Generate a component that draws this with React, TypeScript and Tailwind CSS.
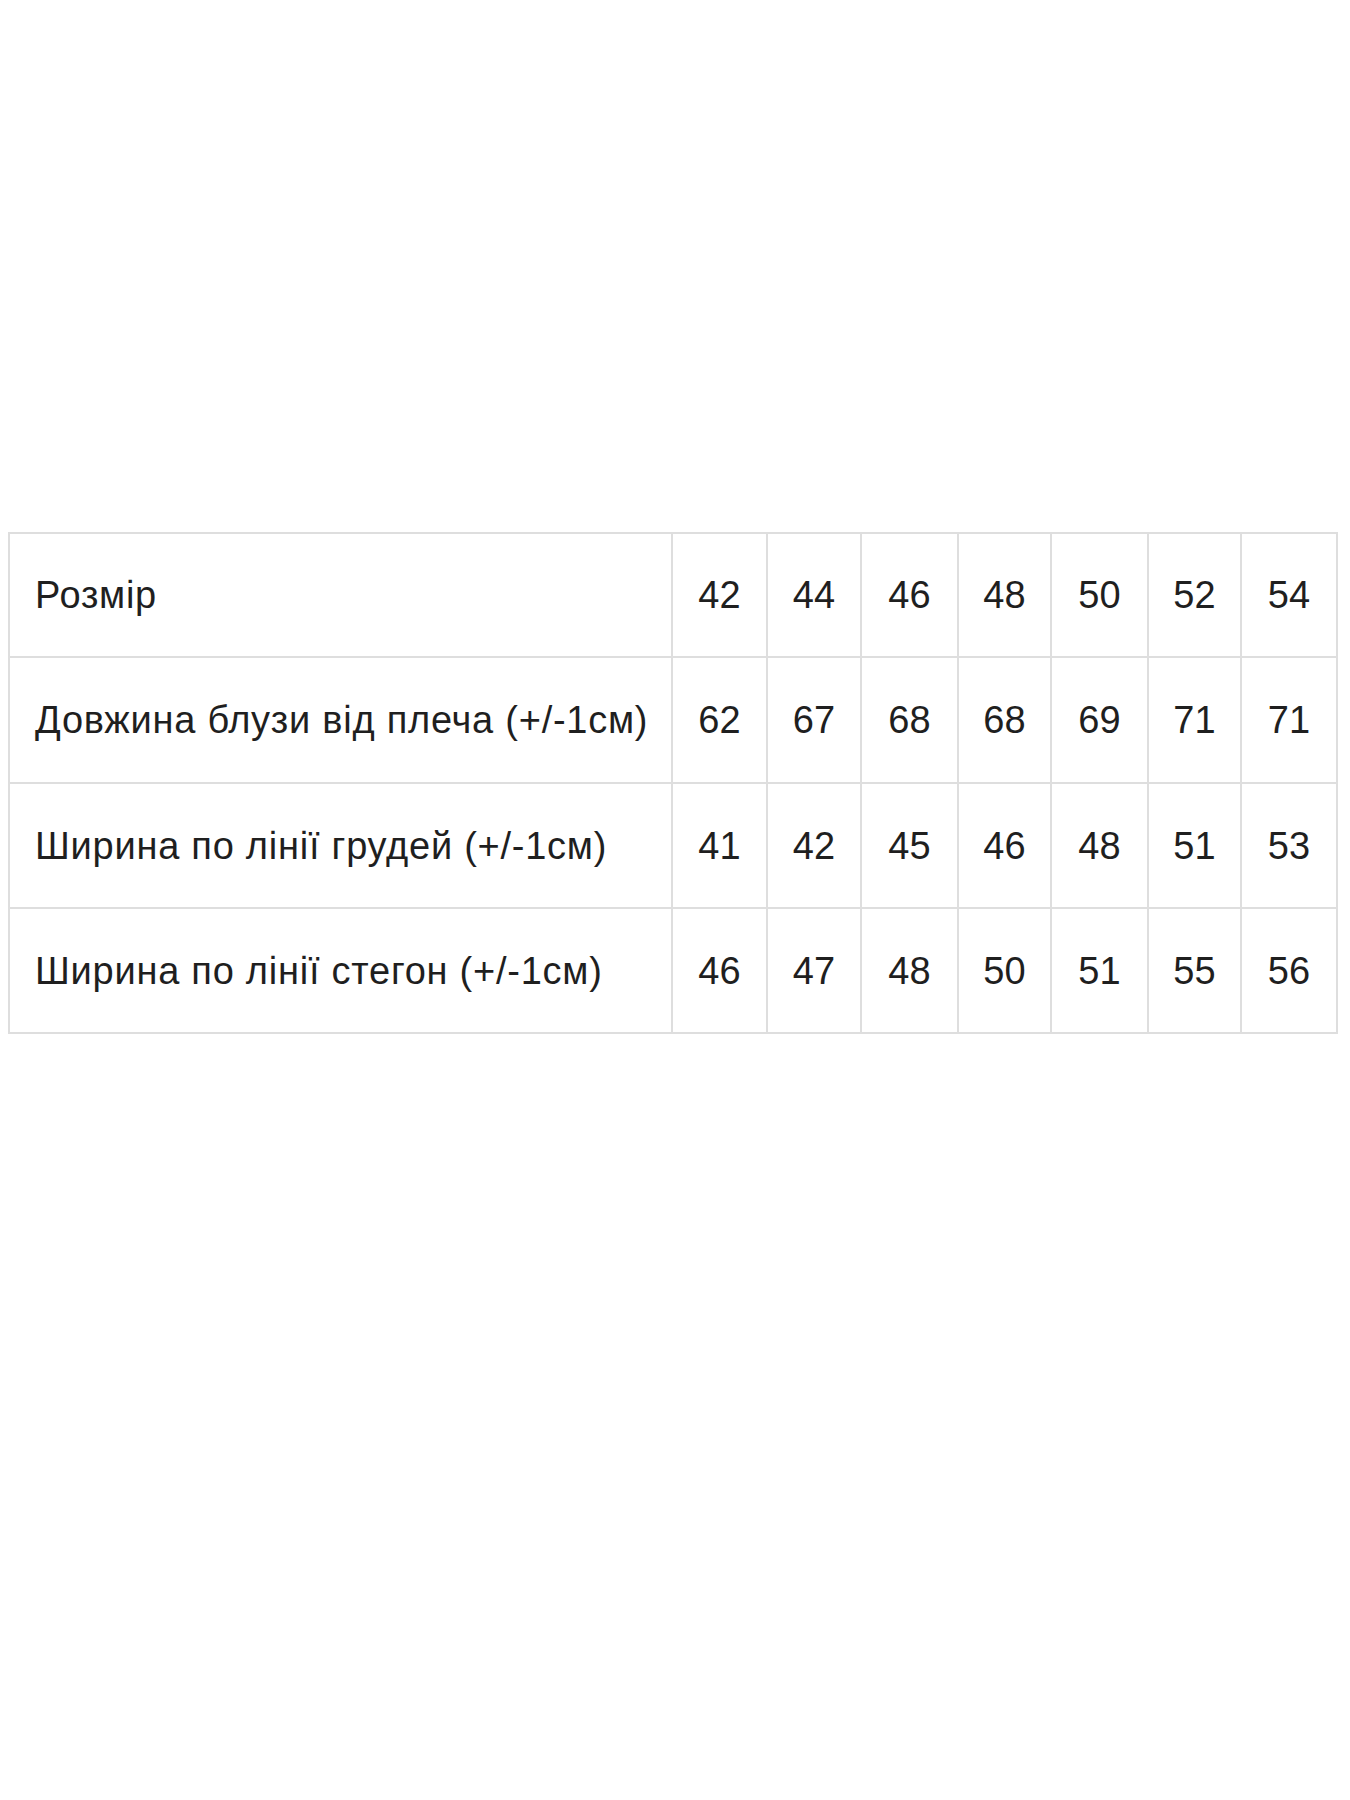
const rows = [
  { label: "Розмір", values: ["42", "44", "46", "48", "50", "52", "54"], h: "h-[124px]" },
  { label: "Довжина блузи від плеча (+/-1см)", values: ["62", "67", "68", "68", "69", "71", "71"], h: "h-[126px]" },
  { label: "Ширина по лінії грудей (+/-1см)", values: ["41", "42", "45", "46", "48", "51", "53"], h: "h-[125px]" },
  { label: "Ширина по лінії стегон (+/-1см)", values: ["46", "47", "48", "50", "51", "55", "56"], h: "h-[125px]" },
];

const App = () => {
  return (
    <div className="w-[1350px] h-[1800px] bg-white font-['Liberation_Sans',Arial,sans-serif] text-[#1f1f1f]">
      <div className="pt-[532px] pl-[8px]">
        <div className="inline-grid grid-cols-[663px_95px_94px_97px_93px_97px_93px_96px] border-l-2 border-t-2 border-[#dedede] text-[38px] leading-none">
          {rows.map((row) => (
            <div key={row.label} className="contents">
              <div className={`${row.h} flex items-center pl-[25px] border-r-2 border-b-2 border-[#dedede] whitespace-nowrap tracking-[0.75px]`}>
                {row.label}
              </div>
              {row.values.map((v, i) => (
                <div
                  key={i}
                  className={`${row.h} flex items-center justify-center border-r-2 border-b-2 border-[#dedede]`}
                >
                  {v}
                </div>
              ))}
            </div>
          ))}
        </div>
      </div>
    </div>
  );
};

export default App;
